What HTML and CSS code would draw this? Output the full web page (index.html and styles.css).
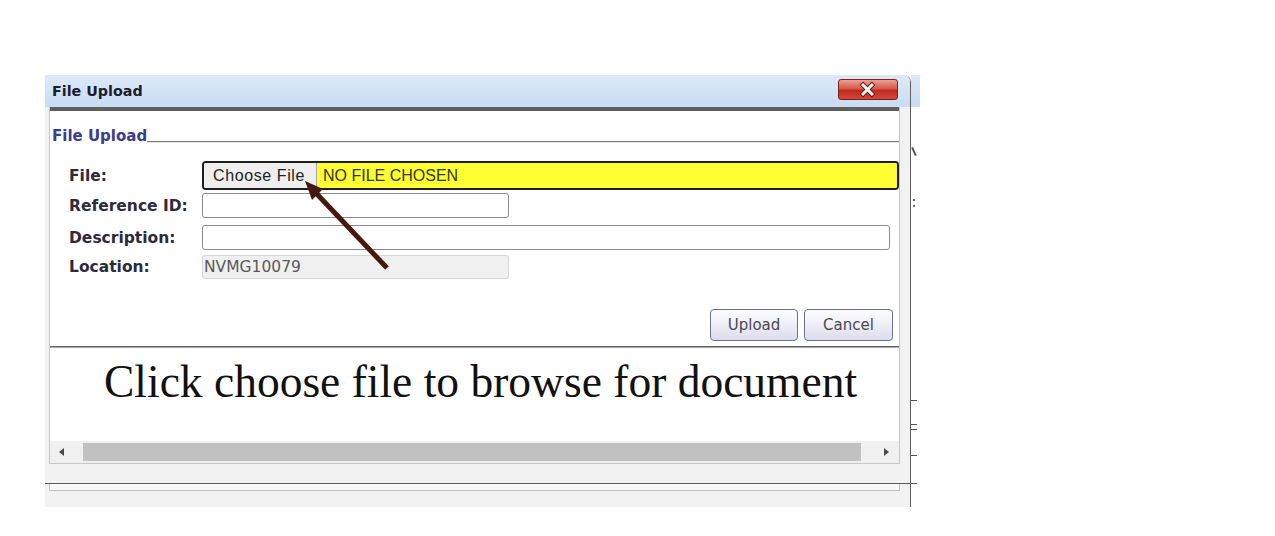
FILE: index.html
```html
<!DOCTYPE html>
<html>
<head>
<meta charset="utf-8">
<title>File Upload</title>
<link rel="stylesheet" href="styles.css">
</head>
<body>
<div class="page">
  <div class="dialog">
    <div class="titlebar">
      <span class="title">File Upload</span>
      <div class="close">
        <svg width="60" height="21" viewBox="0 0 60 21">
          <path d="M25.5 6 L34.5 15 M34.5 6 L25.5 15" stroke="#6b1a12" stroke-width="5" stroke-linecap="square"/>
          <path d="M25.5 6 L34.5 15 M34.5 6 L25.5 15" stroke="#ffffff" stroke-width="3" stroke-linecap="square"/>
        </svg>
      </div>
    </div>
    <div class="frame">
      <div class="panel">
        <div class="darkbar"></div>
        <div class="legend"><span class="legend-title">File Upload</span><span class="legend-rule"></span></div>
        <div class="row row-file">
          <span class="label">File:</span>
          <div class="file-input"><span class="file-btn">Choose File</span><span class="file-name">NO FILE CHOSEN</span></div>
        </div>
        <div class="row row-ref">
          <span class="label">Reference ID:</span>
          <div class="text-input short"></div>
        </div>
        <div class="row row-desc">
          <span class="label">Description:</span>
          <div class="text-input long"></div>
        </div>
        <div class="row row-loc">
          <span class="label">Location:</span>
          <div class="text-input short readonly">NVMG10079</div>
        </div>
        <div class="actions">
          <span class="btn btn-upload">Upload</span>
          <span class="btn btn-cancel">Cancel</span>
        </div>
        <div class="sep"></div>
        <div class="note">Click choose file to browse for document</div>
        <div class="hscroll">
          <div class="sb-left"><svg width="5" height="8" viewBox="0 0 5 8"><polygon points="5,0 5,8 0,4" fill="#4a4a4a"/></svg></div>
          <div class="sb-thumb"></div>
          <div class="sb-right"><svg width="5" height="8" viewBox="0 0 5 8"><polygon points="0,0 0,8 5,4" fill="#4a4a4a"/></svg></div>
        </div>
      </div>
      <div class="footer">
        <div class="footer-rule"></div>
        <div class="footer-box"></div>
      </div>
    </div>
    <svg class="arrow" width="110" height="110" viewBox="0 0 110 110">
      <line x1="92" y1="93" x2="20" y2="17" stroke="#46190f" stroke-width="5"/>
      <polygon points="10,6 28,14 17,25" fill="#46190f"/>
    </svg>
  </div>
  <div class="peek">
    <div class="pk-blue"></div>
    <div class="pk-slash"></div>
    <div class="pk-colon"></div>
    <div class="pk-tick t1"></div>
    <div class="pk-tick t2"></div>
    <div class="pk-tick t3"></div>
    <div class="pk-tick t4"></div>
  </div>
</div>
</body>
</html>
```
FILE: styles.css
```css
body {
  margin: 0;
  background: #ffffff;
  font-family: "DejaVu Sans", sans-serif;
}

.page {
  display: flex;
  align-items: flex-start;
  padding: 75px 0 0 45px;
}

.dialog {
  position: relative;
  width: 865px;
  border-right: 1px solid #5f5f5f;
  border-top-right-radius: 7px;
}

.titlebar {
  height: 32px;
  display: flex;
  justify-content: space-between;
  align-items: flex-start;
  background: linear-gradient(#dde9f8, #c8dcf2);
  border-top-right-radius: 6px;
}

.title {
  font-weight: bold;
  font-size: 14.3px;
  line-height: 16px;
  color: #1c1c2c;
  padding: 8px 0 0 7px;
}

.close {
  margin: 4px 12px 0 0;
  width: 58px;
  height: 19px;
  border: 1px solid #7a2218;
  border-radius: 3px;
  background: linear-gradient(#eba095 0%, #d8584a 45%, #c12a20 55%, #d4473a 100%);
  display: flex;
}

.close svg {
  margin: -1px 0 0 -1px;
}

.frame {
  background: #f2f2f2;
  padding-left: 4px;
  padding-bottom: 16px;
}

.panel {
  width: 849px;
  border: 1px solid #c6c6c6;
  border-top: none;
  background: #ffffff;
}

.darkbar {
  height: 4px;
  background: #5f5f5f;
}

.legend {
  display: flex;
  align-items: flex-end;
  height: 18px;
  margin-top: 16px;
  padding-left: 2px;
}

.legend-title {
  font-weight: bold;
  font-size: 15px;
  line-height: 18px;
  color: #3c3c8e;
}

.legend-rule {
  flex: 1;
  border-bottom: 1px solid #7c7c7c;
  box-shadow: 0 1px 0 #e4e4e4;
  margin-bottom: 3px;
}

.row {
  display: flex;
  align-items: center;
  padding-left: 19px;
}

.label {
  width: 133px;
  font-weight: bold;
  font-size: 15.5px;
  color: #2e2a3a;
}

.row-file { margin-top: 16px; }
.row-ref { margin-top: 3px; }
.row-desc { margin-top: 7px; }
.row-loc { margin-top: 5px; }

.file-input {
  flex: 1;
  height: 25px;
  display: flex;
  border: 2px solid #1e1e1e;
  border-radius: 4px;
  overflow: hidden;
  font-family: "Liberation Sans", sans-serif;
  font-size: 16px;
  line-height: 25px;
}

.file-btn {
  width: 103px;
  padding-left: 9px;
  background: #efefef;
  border-right: 1px solid #a8a8a8;
  color: #222222;
  letter-spacing: 0.6px;
}

.file-name {
  flex: 1;
  padding-left: 6px;
  background: #ffff33;
  color: #34341c;
}

.text-input {
  height: 23px;
  border: 1px solid #8c8c8c;
  border-radius: 3px;
  background: #ffffff;
  box-sizing: content-box;
}

.text-input.short { width: 305px; }
.text-input.long { width: 686px; }

.text-input.readonly {
  height: 22px;
  background: #f0f0f0;
  border-color: #d6d6d6;
  color: #5a5a5a;
  font-size: 15.5px;
  line-height: 22px;
  padding-left: 1px;
  width: 304px;
}

.actions {
  display: flex;
  justify-content: flex-end;
  gap: 6px;
  margin: 30px 6px 5px 0;
}

.btn {
  height: 30px;
  border: 1px solid #6b7096;
  border-radius: 4px;
  background: linear-gradient(#fdfdff, #eeeef8 50%, #dcdcec);
  color: #4a4a4a;
  font-size: 15px;
  line-height: 30px;
  text-align: center;
}

.btn-upload { width: 86px; }
.btn-cancel { width: 87px; }

.sep {
  height: 1px;
  background: #666666;
  border-bottom: 1px solid #a8a8a8;
}

.note {
  height: 93px;
  box-sizing: border-box;
  padding: 9px 0 0 54px;
  font-family: "Liberation Serif", serif;
  font-size: 45.5px;
  line-height: 50px;
  color: #111111;
  white-space: nowrap;
}

.hscroll {
  display: flex;
  align-items: center;
  height: 22px;
  background: #f0f0f0;
}

.sb-left {
  width: 33px;
  padding-left: 9px;
  box-sizing: border-box;
  display: flex;
}

.sb-thumb {
  flex: 1;
  height: 18px;
  background: #c1c1c1;
}

.sb-right {
  width: 38px;
  padding-left: 23px;
  box-sizing: border-box;
  display: flex;
}

.footer {
  padding-top: 19px;
}

.footer-rule {
  height: 1px;
  background: #5a5a5a;
  margin: 0 -7px 0 -4px;
}

.footer-box {
  height: 6px;
  width: 849px;
  border: 1px solid #c2c2c2;
  border-top: none;
  background: #f8f8f8;
}

.arrow {
  position: absolute;
  left: 250px;
  top: 100px;
}

.peek {
  display: flex;
  flex-direction: column;
  width: 12px;
}

.pk-blue {
  height: 32px;
  width: 9px;
  background: linear-gradient(#dbe8f7, #c9dcf1);
}

.pk-slash {
  margin-top: 40px;
  width: 2px;
  height: 9px;
  margin-left: 2px;
  background: #555555;
  transform: rotate(-25deg);
}

.pk-colon {
  margin-top: 43px;
  margin-left: 2px;
  width: 2px;
  height: 8px;
  border-top: 2px solid #666666;
  border-bottom: 2px solid #666666;
  box-sizing: border-box;
}

.pk-tick {
  width: 6px;
  height: 1px;
  background: #555555;
}

.t1 { margin-top: 193px; }
.t2 { margin-top: 23px; }
.t3 { margin-top: 4px; }
.t4 { margin-top: 25px; }
```
